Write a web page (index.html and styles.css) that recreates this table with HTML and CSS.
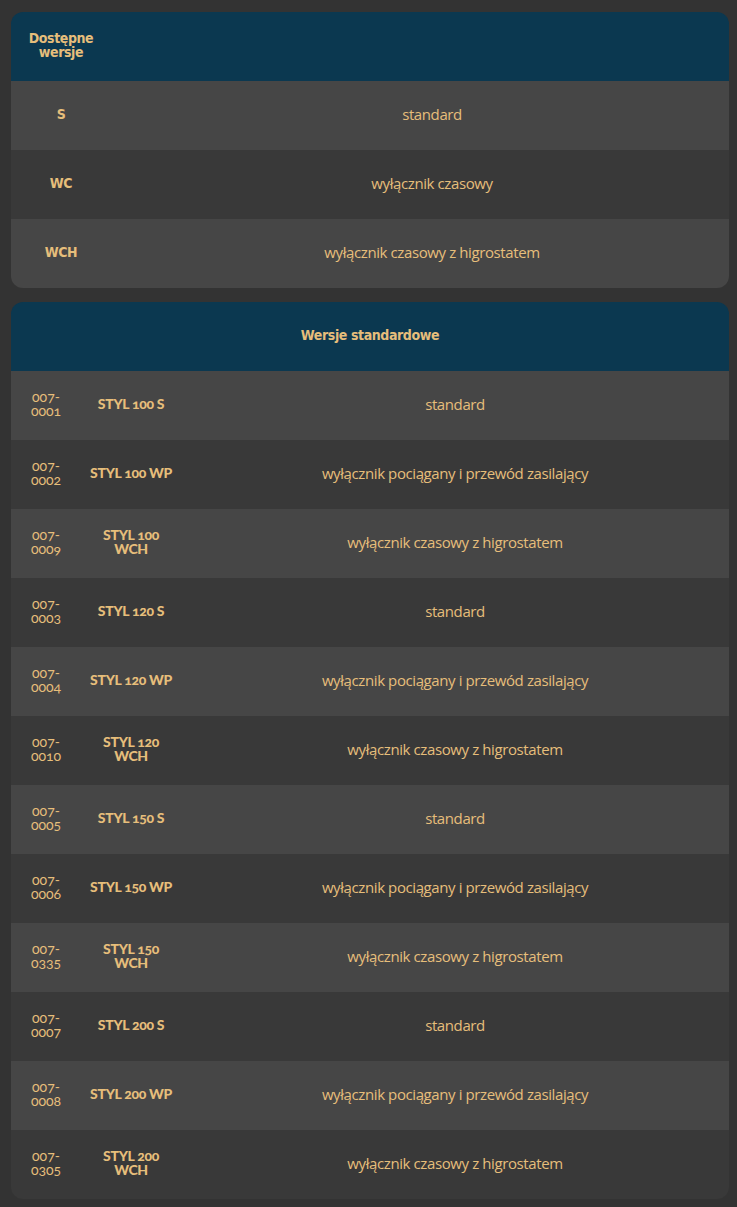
FILE: index.html
```html
<!DOCTYPE html>
<html lang="pl">
<head>
<meta charset="utf-8">
<link rel="stylesheet" href="styles.css">
</head>
<body>
<div class="page">
  <div class="table t1">
    <div class="row head">
      <div class="c1 cond">Dostępne<br>wersje</div>
      <div class="c2"></div>
    </div>
    <div class="row odd"><div class="c1 cond">S</div><div class="c2">standard</div></div>
    <div class="row even"><div class="c1 cond">WC</div><div class="c2">wyłącznik czasowy</div></div>
    <div class="row odd"><div class="c1 cond">WCH</div><div class="c2">wyłącznik czasowy z higrostatem</div></div>
  </div>

  <div class="table t2">
    <div class="row head"><div class="full cond">Wersje standardowe</div></div>
    <div class="row odd"><div class="code">007-<br>0001</div><div class="name">STYL 100 S</div><div class="desc">standard</div></div>
    <div class="row even"><div class="code">007-<br>0002</div><div class="name">STYL 100 WP</div><div class="desc">wyłącznik pociągany i przewód zasilający</div></div>
    <div class="row odd"><div class="code">007-<br>0009</div><div class="name">STYL 100<br>WCH</div><div class="desc">wyłącznik czasowy z higrostatem</div></div>
    <div class="row even"><div class="code">007-<br>0003</div><div class="name">STYL 120 S</div><div class="desc">standard</div></div>
    <div class="row odd"><div class="code">007-<br>0004</div><div class="name">STYL 120 WP</div><div class="desc">wyłącznik pociągany i przewód zasilający</div></div>
    <div class="row even"><div class="code">007-<br>0010</div><div class="name">STYL 120<br>WCH</div><div class="desc">wyłącznik czasowy z higrostatem</div></div>
    <div class="row odd"><div class="code">007-<br>0005</div><div class="name">STYL 150 S</div><div class="desc">standard</div></div>
    <div class="row even"><div class="code">007-<br>0006</div><div class="name">STYL 150 WP</div><div class="desc">wyłącznik pociągany i przewód zasilający</div></div>
    <div class="row odd"><div class="code">007-<br>0335</div><div class="name">STYL 150<br>WCH</div><div class="desc">wyłącznik czasowy z higrostatem</div></div>
    <div class="row even"><div class="code">007-<br>0007</div><div class="name">STYL 200 S</div><div class="desc">standard</div></div>
    <div class="row odd"><div class="code">007-<br>0008</div><div class="name">STYL 200 WP</div><div class="desc">wyłącznik pociągany i przewód zasilający</div></div>
    <div class="row even"><div class="code">007-<br>0305</div><div class="name">STYL 200<br>WCH</div><div class="desc">wyłącznik czasowy z higrostatem</div></div>
  </div>
</div>
</body>
</html>
```
FILE: styles.css
```css
html, body {
  margin: 0;
  padding: 0;
  background: #333333;
}
.page {
  padding: 12px 8px 8px 11px;
  display: flex;
  flex-direction: column;
  gap: 14px;
  color: #e6be7b;
  font-family: "Open Sans", "Noto Sans", sans-serif;
  font-size: 15px;
}
.table {
  border-radius: 12px;
  overflow: hidden;
  width: 718px;
}
.row {
  height: 69px;
  box-sizing: border-box;
  padding-bottom: 3px;
  display: flex;
  align-items: center;
}
.head { background: #0b3850; }
.odd { background: #464646; }
.even { background: #393939; }
.cond {
  font-family: "DejaVu Sans", sans-serif;
  font-stretch: condensed;
  font-weight: bold;
  font-size: 14px;
  line-height: 14px;
  letter-spacing: -0.4px;
}
.t1 .c1 {
  width: 100px;
  text-align: center;
  white-space: nowrap;
}
.t1 .c2 {
  flex: 1;
  text-align: center;
  padding-left: 24px;
  letter-spacing: -0.4px;
}
.t2 .full {
  flex: 1;
  text-align: center;
}
.code {
  width: 70px;
  text-align: center;
  font-family: Lato, sans-serif;
  font-variant-numeric: oldstyle-nums;
  font-size: 14px;
  line-height: 14px;
}
.name {
  width: 100px;
  text-align: center;
  white-space: nowrap;
  font-family: Lato, sans-serif;
  font-weight: 900;
  font-variant-numeric: oldstyle-nums;
  font-size: 14px;
  line-height: 14px;
  letter-spacing: -0.3px;
}
.desc {
  flex: 1;
  text-align: center;
  letter-spacing: -0.4px;
}
```
